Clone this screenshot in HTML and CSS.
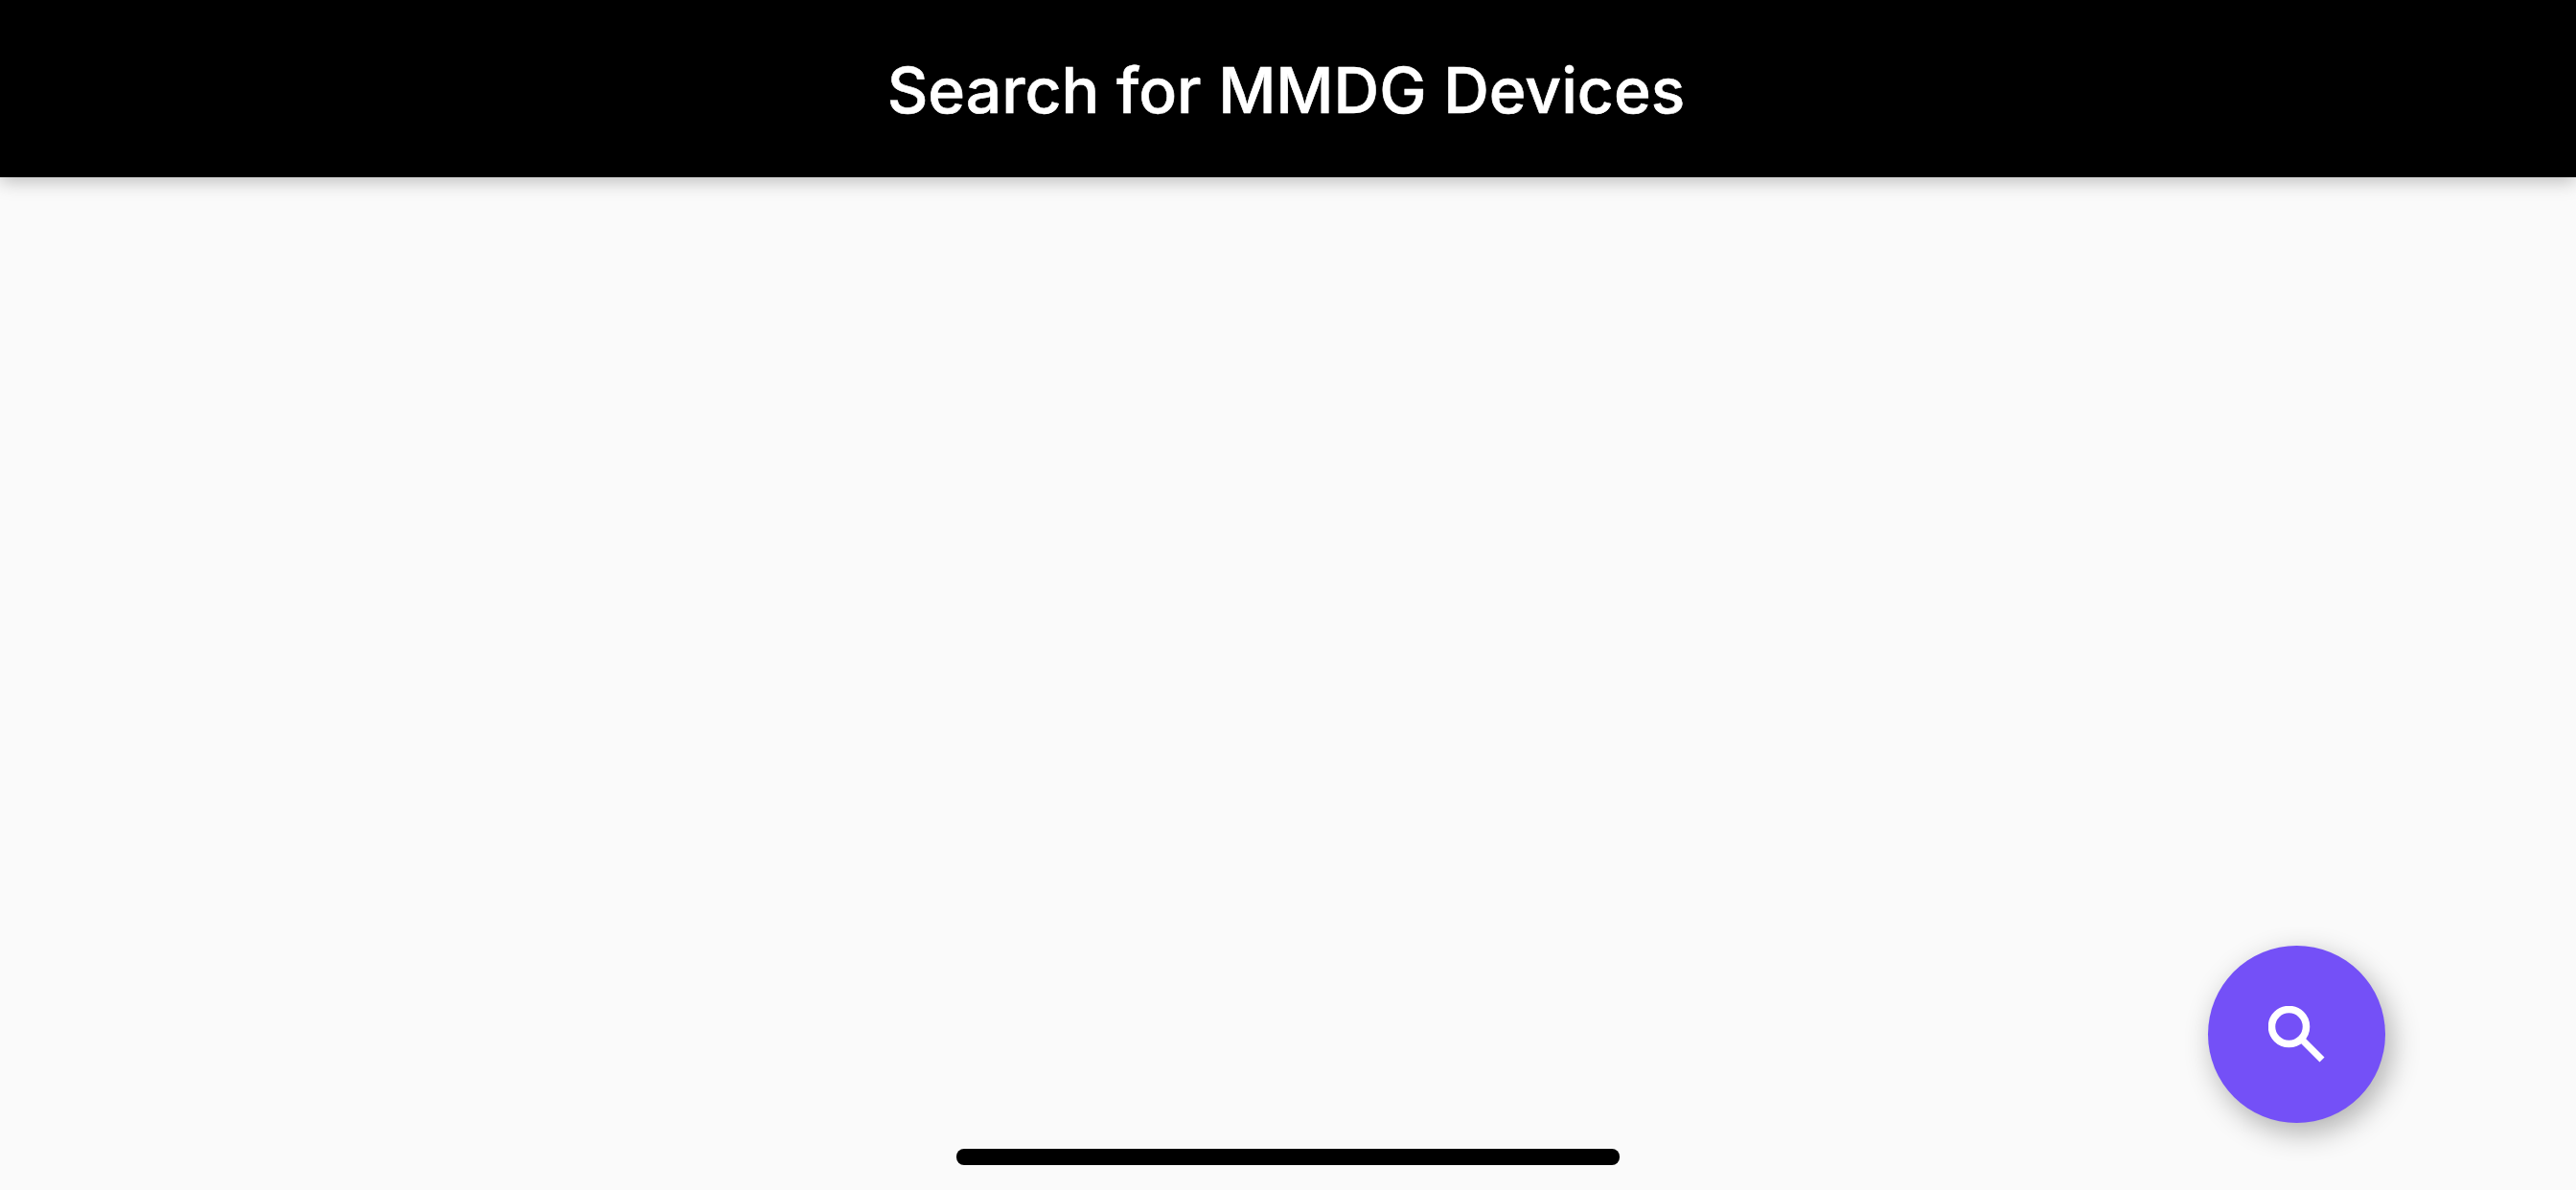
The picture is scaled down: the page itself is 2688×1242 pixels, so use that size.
FILE: index.html
```html
<!DOCTYPE html>
<html lang="en">
<head>
<meta charset="utf-8">
<title>Search for MMDG Devices</title>
<link rel="stylesheet" href="styles.css">
</head>
<body>
<header class="appbar"><h1 class="title">Search for MMDG Devices</h1></header>
<main class="content"></main>
<button class="fab" aria-label="Search">
<svg class="fab-icon" viewBox="0 0 60 60" width="60" height="60"><circle cx="21.5" cy="21.5" r="18" fill="none" stroke="#fff" stroke-width="7.5"/><path d="M36 36 L56 56" fill="none" stroke="#fff" stroke-width="7"/></svg>
</button>
<div class="home-indicator"></div>
</body>
</html>
```
FILE: styles.css
```css
html, body { margin: 0; height: 100%; }
body { display: flex; flex-direction: column; background: #fafafa; overflow: hidden; position: relative; font-family: Inter, "Liberation Sans", sans-serif; }
.appbar { height: 185px; flex: none; background: #000; display: flex; justify-content: center; box-shadow: 0 4px 18px rgba(0,0,0,.26); position: relative; }
.title { margin: 65px 0 0 -4px; color: #fff; font-size: 66px; font-weight: 500; line-height: 58px; letter-spacing: 0; white-space: nowrap; -webkit-text-stroke: 0.6px #fff; }
.content { flex: 1; }
.fab { position: absolute; left: 2304px; top: 987px; width: 185px; height: 185px; padding: 0; border: 0; border-radius: 50%; background: #7450f7; display: flex; align-items: center; justify-content: center; box-shadow: 6px 10px 30px rgba(0,0,0,.3); }
.fab-icon { display: block; }
.home-indicator { position: absolute; left: 998px; top: 1199px; width: 692px; height: 17px; border-radius: 8px; background: #000; }
```
